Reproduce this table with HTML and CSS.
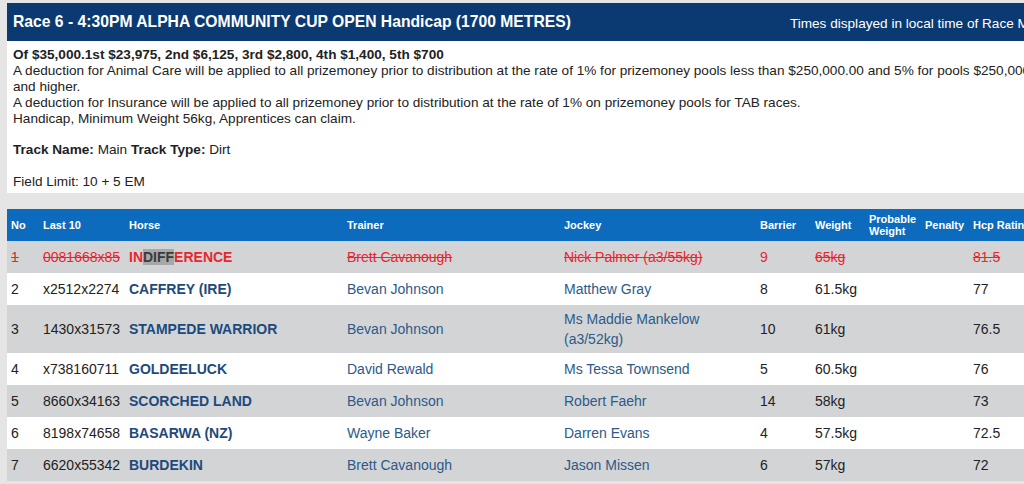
FILE: index.html
```html
<!DOCTYPE html>
<html>
<head>
<meta charset="utf-8">
<link rel="stylesheet" href="styles.css">
</head>
<body>
<div class="page">
  <div class="race-head">
    <h1 class="race-title">Race 6 - 4:30PM ALPHA COMMUNITY CUP OPEN Handicap (1700 METRES)</h1>
    <span class="race-note">Times displayed in local time of Race Meeting</span>
  </div>
  <div class="race-info">
    <p class="prize">
      <strong>Of $35,000.1st $23,975, 2nd $6,125, 3rd $2,800, 4th $1,400, 5th $700</strong><br>
      A deduction for Animal Care will be applied to all prizemoney prior to distribution at the rate of 1% for prizemoney pools less than $250,000.00 and 5% for pools $250,000.00 and higher.<br>
      A deduction for Insurance will be applied to all prizemoney prior to distribution at the rate of 1% on prizemoney pools for TAB races.<br>
      Handicap, Minimum Weight 56kg, Apprentices can claim.
    </p>
    <p class="info-line track"><strong>Track Name:</strong> Main <strong>Track Type:</strong> Dirt</p>
    <p class="info-line limit">Field Limit: 10 + 5 EM</p>
  </div>
  <table class="field">
    <colgroup>
      <col class="c-no"><col class="c-last"><col class="c-horse"><col class="c-trainer"><col class="c-jockey"><col class="c-barrier"><col class="c-weight"><col class="c-prob"><col class="c-pen"><col class="c-hcp">
    </colgroup>
    <thead>
      <tr>
        <th>No</th><th>Last 10</th><th>Horse</th><th>Trainer</th><th>Jockey</th><th>Barrier</th><th>Weight</th><th>Probable Weight</th><th>Penalty</th><th>Hcp Rating</th>
      </tr>
    </thead>
    <tbody>
      <tr class="scratched">
        <td class="strike">1</td><td class="strike">0081668x85</td>
        <td><span class="horse red">IN<span class="hl">DIFF</span>ERENCE</span></td>
        <td class="strike">Brett Cavanough</td><td class="strike">Nick Palmer (a3/55kg)</td>
        <td>9</td><td class="strike">65kg</td><td></td><td></td><td class="strike">81.5</td>
      </tr>
      <tr>
        <td>2</td><td>x2512x2274</td><td><span class="horse">CAFFREY (IRE)</span></td>
        <td class="link">Bevan Johnson</td><td class="link">Matthew Gray</td>
        <td>8</td><td>61.5kg</td><td></td><td></td><td>77</td>
      </tr>
      <tr>
        <td>3</td><td>1430x31573</td><td><span class="horse">STAMPEDE WARRIOR</span></td>
        <td class="link">Bevan Johnson</td><td class="link">Ms Maddie Mankelow (a3/52kg)</td>
        <td>10</td><td>61kg</td><td></td><td></td><td>76.5</td>
      </tr>
      <tr>
        <td>4</td><td>x738160711</td><td><span class="horse">GOLDEELUCK</span></td>
        <td class="link">David Rewald</td><td class="link">Ms Tessa Townsend</td>
        <td>5</td><td>60.5kg</td><td></td><td></td><td>76</td>
      </tr>
      <tr>
        <td>5</td><td>8660x34163</td><td><span class="horse">SCORCHED LAND</span></td>
        <td class="link">Bevan Johnson</td><td class="link">Robert Faehr</td>
        <td>14</td><td>58kg</td><td></td><td></td><td>73</td>
      </tr>
      <tr>
        <td>6</td><td>8198x74658</td><td><span class="horse">BASARWA (NZ)</span></td>
        <td class="link">Wayne Baker</td><td class="link">Darren Evans</td>
        <td>4</td><td>57.5kg</td><td></td><td></td><td>72.5</td>
      </tr>
      <tr>
        <td>7</td><td>6620x55342</td><td><span class="horse">BURDEKIN</span></td>
        <td class="link">Brett Cavanough</td><td class="link">Jason Missen</td>
        <td>6</td><td>57kg</td><td></td><td></td><td>72</td>
      </tr>
    </tbody>
  </table>
</div>
</body>
</html>
```

FILE: styles.css
```css
html, body {
  margin: 0;
  padding: 0;
}
body {
  background: #e5e5e5;
  font-family: "Liberation Sans", Arial, sans-serif;
  color: #222;
  overflow: hidden;
}
.page {
  width: 1070px;
  padding: 3px 0 0 7px;
}
.race-head {
  display: flex;
  align-items: center;
  background: #0b3a73;
  color: #fff;
  height: 38px;
  padding: 0 6px;
}
.race-title {
  margin: 0;
  font-size: 15.7px;
  font-weight: bold;
}
.race-note {
  margin-left: 219px;
  font-size: 13.6px;
  padding-top: 3px;
  white-space: nowrap;
}
.race-info {
  background: #fff;
  padding: 6px 6px 3px;
  font-size: 13.6px;
  line-height: 16px;
}
.race-info p {
  margin: 0 0 15px;
}
.race-info .track {
  margin-bottom: 16px;
}
.race-info .limit {
  margin-bottom: 0;
}
.field {
  margin-top: 16px;
  border-collapse: collapse;
  table-layout: fixed;
  width: 1070px;
  font-size: 14px;
}
.c-no { width: 32px; }
.c-last { width: 86px; }
.c-horse { width: 218px; }
.c-trainer { width: 217px; }
.c-jockey { width: 196px; }
.c-barrier { width: 55px; }
.c-weight { width: 54px; }
.c-prob { width: 56px; }
.c-pen { width: 48px; }
.c-hcp { width: 108px; }
.field th {
  background: #0c6bbd;
  color: #fff;
  font-size: 11px;
  line-height: 12px;
  text-align: left;
  padding: 2px 4px;
  height: 32px;
  box-sizing: border-box;
  white-space: normal;
  vertical-align: middle;
}
.field td {
  padding: 4px 4px;
  line-height: 20px;
  height: 32px;
  box-sizing: border-box;
  vertical-align: middle;
  background: #fff;
}
.field tbody tr:nth-child(odd) td {
  background: #d3d4d6;
}
.horse {
  font-weight: bold;
  color: #1d4a7c;
}
.link {
  color: #2c5a8a;
}
.scratched td {
  color: #e8262d;
}
.strike {
  text-decoration: line-through;
}
.horse.red {
  color: #e8262d;
}
.hl {
  background: #a7a8aa;
  color: #3a3a3a;
}
```
